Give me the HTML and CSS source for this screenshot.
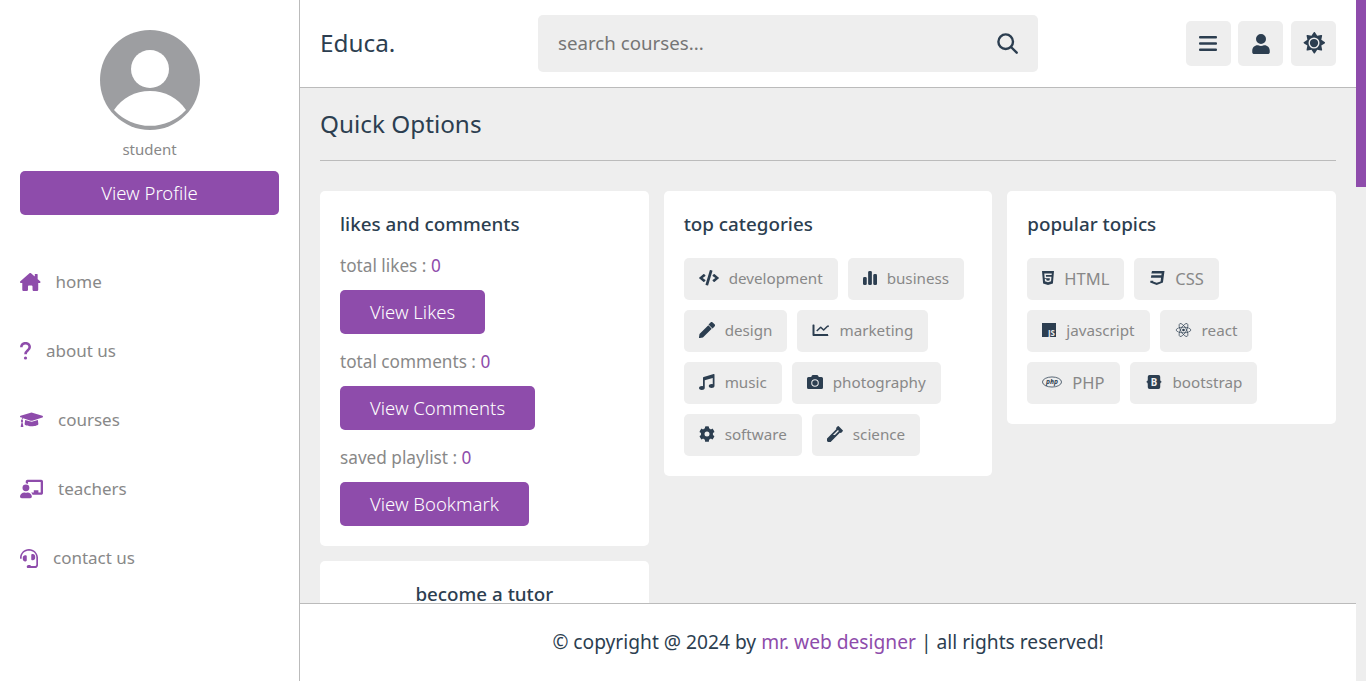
FILE: index.html
```html
<!DOCTYPE html>
<html lang="en">
<head>
  <meta charset="UTF-8">
  <meta name="viewport" content="width=device-width, initial-scale=1.0">
  <title>Educa.</title>
  <link rel="stylesheet" href="styles.css">
</head>
<body>
  <div class="shell">

    <!-- Side Bar -->
    <aside class="side-bar">
      <div class="profile">
        <svg class="avatar" viewBox="0 0 100 100">
          <circle cx="50" cy="50" r="50" fill="#9d9ea1"/>
          <circle cx="50" cy="39" r="19" fill="#fff"/>
          <path d="M14 80 C22 68 35 61 50 61 C65 61 78 68 86 80 A48.800 48.800 0 0 1 14 80 Z" fill="#fff"/>
        </svg>
        <p class="role">student</p>
        <a href="#" class="btn btn-block">View Profile</a>
      </div>
      <nav class="navbar">
        <a href="#" class="nav-link">
          <svg class="nav-icon nav-home" viewBox="0 0 576 512"><path d="M416 30h64a16 16 0 0 1 16 16v130h-80zM575.800 255.500c0 18-15 32.100-32 32.100h-32l.7 160.200c0 2.700-.2 5.400-.5 8.100V472c0 22.100-17.900 40-40 40H392c-22.100 0-40-17.900-40-40V384c0-17.700-14.300-32-32-32H256c-17.700 0-32 14.300-32 32v88c0 22.100-17.900 40-40 40H104c-22.100 0-40-17.900-40-40V287.600H32c-18 0-32-14-32-32.100c0-9 3-17 10-24L266.400 8c7-7 15-8 22-8s15 2 21 7L564.800 231.500c8 7 12 15 11 24z"/></svg>
          <span>home</span>
        </a>
        <a href="#" class="nav-link">
          <svg class="nav-icon nav-about" viewBox="0 0 11 18"><path class="q-stroke" d="M1.300 5.200C1.300 2.700 3.100 1.200 5.500 1.200s4.200 1.500 4.200 3.800c0 3.700-4.200 3.400-4.200 7.200"/><circle cx="5.500" cy="16" r="1.600"/></svg>
          <span>about us</span>
        </a>
        <a href="#" class="nav-link">
          <svg class="nav-icon nav-wide" viewBox="0 0 640 512"><path d="M623 137 342 51a72 72 0 0 0-44 0L17 137c-23 7-23 37 0 44l49 15c-11 13-17 30-18 48-13 8-22 22-22 38 0 15 8 28 19 36L20 433c-2 10 5 19 15 19h43c10 0 17-9 15-19l-25-115c11-8 18-21 18-36 0-15-8-28-20-36 1-15 9-29 22-37l210 65c19 6 42 7 44 0l281-86c23-7 23-37 0-51zM352 298c-29 9-53 4-64 0l-145-45-14 115c0 35 86 64 191 64s191-29 191-64l-14-115z"/></svg>
          <span>courses</span>
        </a>
        <a href="#" class="nav-link">
          <svg class="nav-icon nav-wide" viewBox="0 0 640 512"><path d="M208 352c-2 0-4 0-6 1a117 117 0 0 1-37 6c-13 0-25-2-37-6-2-1-4-1-6-1C60 352 0 403 0 464c0 26 21 48 48 48h234c26 0 48-22 48-48 0-61-60-112-122-112zM165 320a96 96 0 1 0 0-192 96 96 0 0 0 0 192zM592 0H208c-26 0-48 22-48 50v46c23 0 45 7 64 18V64h352v288h-64v-64H384v64h-76c19 17 33 38 41 64h243c26 0 48-22 48-50V50c0-28-22-50-48-50z"/></svg>
          <span>teachers</span>
        </a>
        <a href="#" class="nav-link">
          <svg class="nav-icon nav-contact" viewBox="0 0 512 512"><path d="M192 208c0-18-14-32-32-32h-16c-35 0-64 29-64 64v48c0 35 29 64 64 64h16c18 0 32-14 32-32V208zm176 112c35 0 64-29 64-64v-48c0-35-29-64-64-64h-16c-18 0-32 14-32 32v112c0 18 14 32 32 32h16zM256 0C113 0 8 119 0 240v24c0 9 7 16 16 16h16c9 0 16-7 16-16v-24c0-115 93-192 208-192s208 77 208 192h0v198c0 27-22 48-48 48H314c-6-20-24-32-42-32h-32c-26 0-48 21-48 48s21 48 48 48h176c53 0 96-43 96-96V240C504 119 399 0 256 0z"/></svg>
          <span>contact us</span>
        </a>
      </nav>
    </aside>

    <div class="page">
      <!-- Header -->
      <header class="header">
        <a href="#" class="logo">Educa.</a>
        <form class="search-form">
          <input type="text" class="search-input" placeholder="search courses...">
          <svg class="search-icon" viewBox="0 0 21 21"><circle cx="8.700" cy="8.700" r="7.300"/><line x1="14" y1="14" x2="19.700" y2="19.700"/></svg>
        </form>
        <div class="icons">
          <div class="icon-btn">
            <svg class="menu-icon" viewBox="0 0 18 15"><rect width="18" height="2.600" rx="1"/><rect y="6.200" width="18" height="2.600" rx="1"/><rect y="12.400" width="18" height="2.600" rx="1"/></svg>
          </div>
          <div class="icon-btn">
            <svg class="hd-icon" viewBox="0 0 448 512"><path d="M224 256a128 128 0 1 0 0-256 128 128 0 0 0 0 256zm90 32h-17a174 174 0 0 1-146 0h-17C60 288 0 348 0 422v42c0 26 22 48 48 48h352c26 0 48-22 48-48v-42c0-74-60-134-134-134z"/></svg>
          </div>
          <div class="icon-btn">
            <svg class="hd-icon sun-icon" viewBox="0 0 512 512"><path d="M256 160a96 96 0 1 0 0 192 96 96 0 0 0 0-192zM502 233l-76-50 18-89a20 20 0 0 0-24-24l-89 18-50-76a20 20 0 0 0-34 0l-50 76-89-18a20 20 0 0 0-24 24l18 89-76 50a20 20 0 0 0 0 34l76 50-18 89a20 20 0 0 0 24 24l89-18 50 76a20 20 0 0 0 34 0l50-76 89 18a20 20 0 0 0 24-24l-18-89 76-50a20 20 0 0 0 0-34zM256 384a128 128 0 1 1 0-256 128 128 0 0 1 0 256z"/></svg>
          </div>
        </div>
      </header>

      <!-- Quick Options -->
      <main class="main">
        <h1 class="heading">Quick Options</h1>
        <div class="box-container">
          <div class="column">
            <div class="box">
              <h3 class="title">likes and comments</h3>
              <p class="stat">total likes : <span>0</span></p>
              <a href="#" class="btn">View Likes</a>
              <p class="stat">total comments : <span>0</span></p>
              <a href="#" class="btn">View Comments</a>
              <p class="stat">saved playlist : <span>0</span></p>
              <a href="#" class="btn">View Bookmark</a>
            </div>
            <div class="box tutor">
              <h3 class="title">become a tutor</h3>
            </div>
          </div>

          <div class="box">
            <h3 class="title">top categories</h3>
            <div class="flex">
              <a href="#" class="tag"><svg class="tag-icon icon-code" viewBox="0 0 640 512"><path d="M278 495l-61-18a12 12 0 0 1-8-15L346 9a12 12 0 0 1 15-8l61 18a12 12 0 0 1 8 15L293 487a12 12 0 0 1-15 8zM164 382l43-46a12 12 0 0 0-1-17L116 256l90-63a12 12 0 0 0 1-17l-43-46a12 12 0 0 0-17 0L4 247a12 12 0 0 0 0 18l143 117a12 12 0 0 0 17 0zm329 0 143-117a12 12 0 0 0 0-18L493 130a12 12 0 0 0-17 0l-43 46a12 12 0 0 0 1 17l90 63-90 63a12 12 0 0 0-1 17l43 46a12 12 0 0 0 17 0z"/></svg>development</a>
              <a href="#" class="tag"><svg class="tag-icon icon-bars" viewBox="0 0 448 512"><rect x="0" y="224" width="120" height="256" rx="44"/><rect x="164" y="32" width="120" height="448" rx="44"/><rect x="328" y="128" width="120" height="352" rx="44"/></svg>business</a>
              <a href="#" class="tag"><svg class="tag-icon" viewBox="0 0 512 512"><path d="M497 75 437 15a48 48 0 0 0-68 0l-57 57a12 12 0 0 0 0 17l111 111a12 12 0 0 0 17 0l57-57a48 48 0 0 0 0-68zM291 113 16 387 0 484a24 24 0 0 0 28 28l97-17 274-274a12 12 0 0 0 0-17L308 113a12 12 0 0 0-17 0z"/></svg>design</a>
              <a href="#" class="tag"><svg class="tag-icon icon-chart" viewBox="0 0 512 512"><path d="M496 384H64V80a16 16 0 0 0-16-16H16A16 16 0 0 0 0 80v336c0 18 14 32 32 32h464a16 16 0 0 0 16-16v0a16 16 0 0 0-16-16zM472 96 356 212 280 137a24 24 0 0 0-34 0L118 265l34 34 111-111 76 76a24 24 0 0 0 34 0l133-133 34 34V96z" transform="translate(0 20) scale(1 .95)"/></svg>marketing</a>
              <a href="#" class="tag"><svg class="tag-icon" viewBox="0 0 512 512"><path d="M470 1 150 96a32 32 0 0 0-22 31v261c-11-3-23-4-36-4-51 0-92 29-92 64s41 64 92 64 92-29 92-64V200l256-75v199c-11-3-23-4-36-4-51 0-92 29-92 64s41 64 92 64 92-29 92-64V32a32 32 0 0 0-42-31z"/></svg>music</a>
              <a href="#" class="tag"><svg class="tag-icon" viewBox="0 0 512 512"><path d="M512 144v288a48 48 0 0 1-48 48H48a48 48 0 0 1-48-48V144a48 48 0 0 1 48-48h88l12-33a48 48 0 0 1 45-31h125a48 48 0 0 1 45 31l13 33h88a48 48 0 0 1 48 48zM376 288a120 120 0 1 0-240 0 120 120 0 0 0 240 0zm-32 0a88 88 0 1 1-176 0 88 88 0 0 1 176 0z"/></svg>photography</a>
              <a href="#" class="tag"><svg class="tag-icon" viewBox="0 0 512 512"><path fill-rule="evenodd" d="M487 316l-43-25a194 194 0 0 0 0-70l43-25a12 12 0 0 0 5-14 248 248 0 0 0-55-95 12 12 0 0 0-15-3l-42 25a192 192 0 0 0-61-35V24a12 12 0 0 0-9-12 250 250 0 0 0-110 0 12 12 0 0 0-9 12v50a198 198 0 0 0-61 35L88 84a12 12 0 0 0-15 3 246 246 0 0 0-55 95 12 12 0 0 0 5 14l43 25a194 194 0 0 0 0 70l-43 25a12 12 0 0 0-5 14 248 248 0 0 0 55 95 12 12 0 0 0 15 3l42-25a192 192 0 0 0 61 35v50a12 12 0 0 0 9 12 250 250 0 0 0 110 0 12 12 0 0 0 9-12v-50a198 198 0 0 0 61-35l42 25a12 12 0 0 0 15-3 246 246 0 0 0 55-95 12 12 0 0 0-5-14zM256 336a80 80 0 1 1 0-160 80 80 0 0 1 0 160z"/></svg>software</a>
              <a href="#" class="tag"><svg class="tag-icon" viewBox="0 0 512 512"><path d="M342 10 297 55a24 24 0 0 0 0 34l6 6L10 388a72 72 0 0 0 0 102l12 12a72 72 0 0 0 102 0l293-293 6 6a24 24 0 0 0 34 0l45-45a24 24 0 0 0 0-34L376 10a24 24 0 0 0-34 0zM190 290l160-160 32 32-128 128z"/></svg>science</a>
            </div>
          </div>

          <div class="box">
            <h3 class="title">popular topics</h3>
            <div class="flex">
              <a href="#" class="tag tag-caps"><svg class="tag-icon icon-html" viewBox="0 0 384 512"><path fill-rule="evenodd" d="M0 32l35 403 157 45 157-45 35-403zM308 162H124l4 50h175l-14 151-97 27-97-27-6-75h47l3 38 53 15 53-15 6-62H86L73 113h240z"/></svg>HTML</a>
              <a href="#" class="tag tag-caps"><svg class="tag-icon" viewBox="0 0 512 512"><path d="M96 32h400l-50 370-200 78-210-78 10-60h90l-5 28 115 38 125-38 15-122H60l15-80h320l10-56H75z"/></svg>CSS</a>
              <a href="#" class="tag"><svg class="tag-icon icon-js" viewBox="0 0 14 14"><rect width="14" height="14"/><text x="13" y="12.500" class="js-text">JS</text></svg>javascript</a>
              <a href="#" class="tag"><svg class="tag-icon icon-react" viewBox="-12 -12 24 24"><circle r="2"/><g class="orbit"><ellipse rx="11" ry="4.200"/><ellipse rx="11" ry="4.200" transform="rotate(60)"/><ellipse rx="11" ry="4.200" transform="rotate(120)"/></g></svg>react</a>
              <a href="#" class="tag tag-caps"><svg class="tag-icon icon-php" viewBox="0 0 21 12"><ellipse cx="10.500" cy="6" rx="10" ry="5.300"/><text x="10.500" y="8.300" class="php-text">php</text></svg>PHP</a>
              <a href="#" class="tag"><svg class="tag-icon icon-boot" viewBox="0 0 18 18"><path d="M4 1h10a2 2 0 0 1 2 2v3c0 2 .6 2.500 2 3-1.400.5-2 1-2 3v3a2 2 0 0 1-2 2H4a2 2 0 0 1-2-2v-3c0-2-.6-2.500-2-3 1.400-.5 2-1 2-3V3a2 2 0 0 1 2-2z"/><text x="9" y="13" class="boot-text">B</text></svg>bootstrap</a>
            </div>
          </div>
        </div>
      </main>

      <!-- Footer -->
      <footer class="footer"><p>&copy; copyright @ 2024 by <span class="accent">mr. web designer</span> | all rights reserved!</p></footer>
    </div>

    <div class="scrollbar"><div class="thumb"></div></div>
  </div>
</body>
</html>
```

FILE: styles.css
```css
/* General */
* {
  margin: 0;
  padding: 0;
  box-sizing: border-box;
  text-decoration: none;
}

body {
  font-family: "Noto Sans", sans-serif;
  background: #eee;
  color: #2c3e50;
  overflow: hidden;
}

.shell {
  display: flex;
  height: 100vh;
}

/* Buttons */
.btn {
  display: inline-block;
  background: #8e4cab;
  color: #fff;
  border-radius: 5px;
  font-size: 18.500px;
  font-weight: 300;
  line-height: 24px;
  padding: 10px 30px;
}

.btn-block {
  display: block;
  text-align: center;
}

/* Side Bar */
.side-bar {
  flex: 0 0 300px;
  background: #fff;
  border-right: 1px solid #bbb;
  padding: 30px 20px 0;
}

.profile {
  display: flex;
  flex-direction: column;
  align-items: stretch;
  text-align: center;
}

.avatar {
  width: 100px;
  height: 100px;
  align-self: center;
}

.role {
  font-size: 15px;
  line-height: 20px;
  color: #888;
  margin-top: 9px;
  margin-bottom: 12px;
}

.navbar {
  display: flex;
  flex-direction: column;
  margin-top: 32px;
  margin-left: -20px;
  margin-right: -20px;
}

.nav-link {
  display: flex;
  align-items: center;
  height: 69px;
  padding: 0 20px;
  font-size: 17px;
  color: #888;
}

.nav-icon {
  height: 20px;
  fill: #8e4cab;
  margin-right: 15px;
  flex-shrink: 0;
}

.nav-home {
  width: 20.500px;
}

.nav-about {
  width: 11px;
  height: 18px;
}

.q-stroke {
  fill: none;
  stroke: #8e4cab;
  stroke-width: 2.600;
}

.nav-wide {
  width: 23px;
}

.nav-contact {
  width: 18px;
}

/* Right side */
.page {
  flex: 1;
  min-width: 0;
  display: flex;
  flex-direction: column;
}

.header {
  flex: 0 0 88px;
  background: #fff;
  border-bottom: 1px solid #bbb;
  display: flex;
  align-items: center;
  padding: 0 20px;
}

.logo {
  width: 218px;
  font-size: 24.300px;
  line-height: 32px;
  margin-bottom: 2px;
  color: #2c3e50;
}

.search-form {
  width: 500px;
  height: 57px;
  background: #eee;
  border-radius: 5px;
  display: flex;
  align-items: center;
  padding: 0 20px;
}

.search-input {
  flex: 1;
  border: none;
  outline: none;
  background: none;
  font-family: inherit;
  font-size: 18.700px;
  line-height: 24px;
  margin-bottom: 2px;
  color: #2c3e50;
}

.search-input::placeholder {
  color: #757575;
}

.search-icon {
  width: 21px;
  height: 21px;
  fill: none;
  stroke: #2c3e50;
  stroke-width: 2.400;
  stroke-linecap: round;
}

.icons {
  display: flex;
  gap: 7.600px;
  margin-left: auto;
}

.icon-btn {
  width: 45px;
  height: 45px;
  background: #eee;
  border-radius: 5px;
  display: flex;
  align-items: center;
  justify-content: center;
}

.hd-icon {
  width: 20px;
  height: 20px;
  fill: #2c3e50;
}

.sun-icon {
  width: 22px;
  height: 22px;
  margin-bottom: 2px;
}

.menu-icon {
  width: 18px;
  height: 15px;
  fill: #2c3e50;
}

/* Main */
.main {
  flex: 1;
  min-height: 0;
  overflow: hidden;
  padding: 20px;
}

.heading {
  font-size: 24.300px;
  font-weight: 400;
  line-height: 32px;
  padding-bottom: 20px;
  border-bottom: 1px solid #bbb;
  margin-bottom: 30px;
}

.box-container {
  display: grid;
  grid-template-columns: repeat(3, 1fr);
  gap: 15px;
  align-items: start;
}

.column {
  display: flex;
  flex-direction: column;
  gap: 15px;
}

.box {
  background: #fff;
  border-radius: 5px;
  padding: 20px;
}

.title {
  font-size: 18.800px;
  font-weight: 500;
  line-height: 26px;
  margin-bottom: 17px;
}

.tutor {
  text-align: center;
}

.stat {
  font-size: 17.200px;
  line-height: 24px;
  color: #888;
  margin-bottom: 12px;
}

.box .btn + .stat {
  margin-top: 16px;
}

.stat span {
  color: #8e4cab;
}

/* Tags */
.flex {
  display: flex;
  flex-wrap: wrap;
  gap: 10px;
  margin-top: 21px;
}

.tag {
  display: inline-flex;
  align-items: center;
  height: 42px;
  padding: 0 15px 2px;
  background: #eee;
  border-radius: 5px;
  font-size: 15.200px;
  color: #888;
}

.tag-caps {
  font-size: 16.500px;
}

.tag-icon {
  width: 16px;
  height: 16px;
  fill: #2c3e50;
  margin-right: 10px;
  flex-shrink: 0;
}

.icon-code {
  width: 20px;
}

.icon-bars,
.icon-js {
  width: 14px;
}

.icon-chart,
.icon-react {
  width: 17px;
}

.icon-boot {
  width: 18px;
}

.icon-html {
  width: 12px;
}

.js-text {
  font-size: 8px;
  font-weight: 700;
  fill: #eee;
  text-anchor: end;
}

.orbit {
  fill: none;
  stroke: #2c3e50;
  stroke-width: 1;
}

.icon-php {
  width: 20px;
  fill: none;
  stroke: #2c3e50;
  stroke-width: .8;
}

.php-text {
  font-size: 7px;
  font-style: italic;
  font-weight: 700;
  fill: #2c3e50;
  stroke: none;
  text-anchor: middle;
}

.boot-text {
  font-size: 11px;
  font-weight: 700;
  fill: #eee;
  text-anchor: middle;
}

/* Footer */
.footer {
  flex: 0 0 78px;
  background: #fff;
  border-top: 1px solid #bbb;
  display: flex;
  align-items: center;
  justify-content: center;
  padding-bottom: 2px;
  font-size: 19.200px;
}

.accent {
  color: #8e4cab;
}

/* Scrollbar */
.scrollbar {
  flex: 0 0 10px;
}

.thumb {
  height: 187px;
  background: #8e4cab;
}
```
